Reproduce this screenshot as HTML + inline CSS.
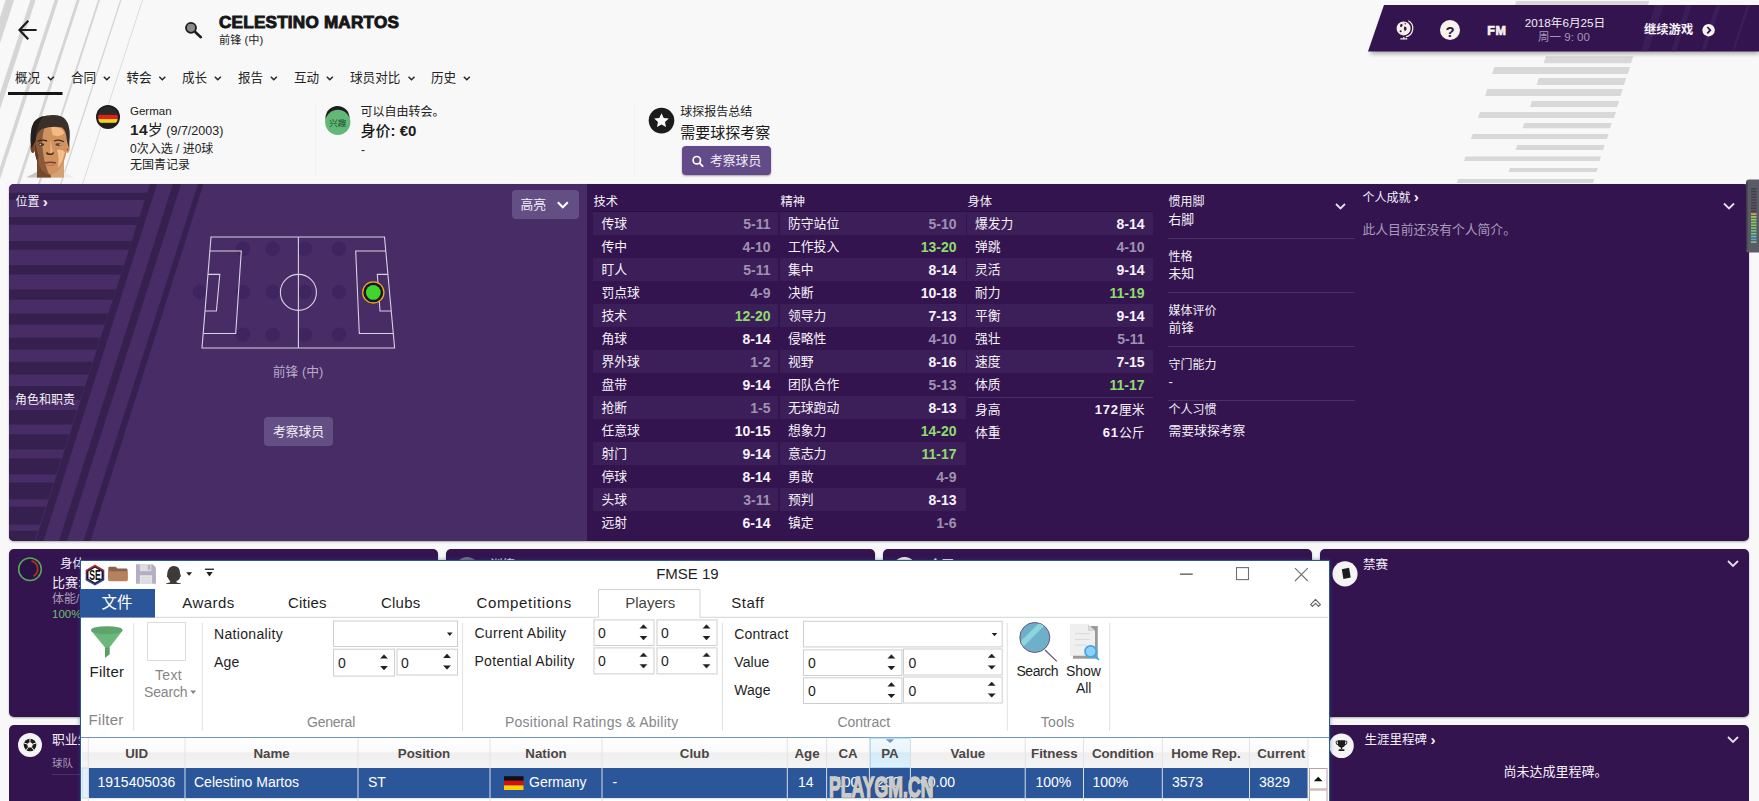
<!DOCTYPE html><html lang="zh"><head><meta charset="utf-8"><title>Celestino Martos</title><style>
html,body{margin:0;padding:0;}
body{width:1759px;height:801px;overflow:hidden;background:#f8f8f8;position:relative;
 font-family:"Liberation Sans","Noto Sans CJK SC",sans-serif;color:#222;}
.a{position:absolute;white-space:nowrap;line-height:1;}
.t{position:absolute;white-space:nowrap;line-height:1;transform:translateY(-50%);}
.tc{position:absolute;white-space:nowrap;line-height:1;transform:translate(-50%,-50%);}
.tr{position:absolute;white-space:nowrap;line-height:1;transform:translate(-100%,-50%);}
svg{position:absolute;left:0;top:0;overflow:visible;}
.w{color:#fff;}
.pn{position:absolute;background:#33144f;border-radius:5px;}
.seg{font-family:"Liberation Sans","Noto Sans CJK SC",sans-serif;}
</style></head><body><svg width="1759" height="801" viewBox="0 0 1759 801"><polygon points="5.6,0 14.1,0 -47.9,190 -56.4,190" fill="#d5d5d5"/><polygon points="30.4,0 35.6,0 -26.3,190 -31.5,190" fill="#d5d5d5"/><polygon points="54.6,0 58.4,0 -3.5,190 -7.3,190" fill="#d5d5d5"/><polygon points="76.7,0 79.7,0 17.8,190 14.8,190" fill="#d5d5d5"/><polygon points="98.0,0 100.0,0 38.1,190 36.0,190" fill="#d5d5d5"/><polygon points="120.1,0 121.5,0 59.6,190 58.2,190" fill="#d5d5d5"/><polygon points="142.1,0 142.9,0 81.0,190 80.2,190" fill="#d5d5d5"/><polygon points="1516.3,1.0 1649.3,1.0 1648.0,5.0 1515.0,5.0" fill="#d8d8d8"/><polygon points="1545.9,56.2 1633.3,56.2 1631.0,63.3 1543.6,63.3" fill="#d8d8d8"/><polygon points="1494.3,67.0 1630.0,67.0 1627.7,74.0 1492.0,74.0" fill="#d8d8d8"/><polygon points="1538.8,78.0 1626.3,78.0 1624.0,85.0 1536.5,85.0" fill="#d8d8d8"/><polygon points="1487.3,89.0 1622.8,89.0 1620.5,96.0 1485.0,96.0" fill="#d8d8d8"/><polygon points="1532.0,101.0 1619.0,101.0 1617.0,107.0 1530.0,107.0" fill="#d8d8d8"/><polygon points="1480.0,112.0 1616.0,112.0 1614.0,118.0 1478.0,118.0" fill="#d8d8d8"/><polygon points="1524.3,123.0 1611.7,123.0 1610.0,128.3 1522.6,128.3" fill="#d8d8d8"/><polygon points="1472.7,134.0 1608.7,134.0 1607.0,139.0 1471.0,139.0" fill="#d8d8d8"/><polygon points="1517.2,145.0 1604.7,145.0 1603.0,150.0 1515.5,150.0" fill="#d8d8d8"/><polygon points="1465.5,156.5 1601.0,156.5 1599.5,161.0 1464.0,161.0" fill="#d8d8d8"/><polygon points="1509.9,168.0 1597.8,168.0 1596.5,172.0 1508.6,172.0" fill="#d8d8d8"/><polygon points="1458.0,179.0 1594.3,179.0 1593.0,183.0 1456.7,183.0" fill="#d8d8d8"/></svg><svg width="1759" height="60" viewBox="0 0 1759 60"><path d="M35.5 30H20M27.5 21.5L19.5 30l8 8.5" fill="none" stroke="#1c1c1c" stroke-width="2.2" stroke-linecap="square"/><circle cx="191" cy="27.8" r="5" fill="#8a8a8a" stroke="#1c1c1c" stroke-width="1.8"/><path d="M195.5 32.2L200.8 37.2" stroke="#1c1c1c" stroke-width="2.6" stroke-linecap="round"/></svg><div class="t" id="nm" style="left:219px;top:21.9px;font-size:16.2px;font-weight:bold;color:#161616;letter-spacing:0.2px;-webkit-text-stroke:0.9px #161616;transform-origin:0 50%;transform:translateY(-50%) scaleX(1.058)">CELESTINO MARTOS</div><div class="t" style="left:219px;top:41px;font-size:11.2px;color:#222">前锋 (中)</div><div class="t" style="left:15px;top:77.8px;font-size:12.6px;color:#222">概况</div><div class="t" style="left:71px;top:77.8px;font-size:12.6px;color:#222">合同</div><div class="t" style="left:126.5px;top:77.8px;font-size:12.6px;color:#222">转会</div><div class="t" style="left:182px;top:77.8px;font-size:12.6px;color:#222">成长</div><div class="t" style="left:238px;top:77.8px;font-size:12.6px;color:#222">报告</div><div class="t" style="left:294px;top:77.8px;font-size:12.6px;color:#222">互动</div><div class="t" style="left:350px;top:77.8px;font-size:12.6px;color:#222">球员对比</div><div class="t" style="left:431px;top:77.8px;font-size:12.6px;color:#222">历史</div><svg width="600" height="100" viewBox="0 0 600 100"><path d="M47.8 76.8l3 3 3-3" fill="none" stroke="#222" stroke-width="1.4"/><path d="M103.8 76.8l3 3 3-3" fill="none" stroke="#222" stroke-width="1.4"/><path d="M159.3 76.8l3 3 3-3" fill="none" stroke="#222" stroke-width="1.4"/><path d="M214.8 76.8l3 3 3-3" fill="none" stroke="#222" stroke-width="1.4"/><path d="M270.8 76.8l3 3 3-3" fill="none" stroke="#222" stroke-width="1.4"/><path d="M326.8 76.8l3 3 3-3" fill="none" stroke="#222" stroke-width="1.4"/><path d="M408.5 76.8l3 3 3-3" fill="none" stroke="#222" stroke-width="1.4"/><path d="M463.8 76.8l3 3 3-3" fill="none" stroke="#222" stroke-width="1.4"/><rect x="8" y="92" width="54.5" height="3" fill="#151515"/></svg><svg width="200" height="200" viewBox="0 0 200 200"><path d="M26 177.6 Q31 175 37.5 171.5 L37.5 177.6 Z" fill="#c2c2c8"/><path d="M62.5 171.5 Q69 174.5 74.5 177.6 L62.5 177.6 Z" fill="#ededee"/><path d="M37 160 L37 177.6 L64 177.6 L64 160 Z" fill="#d3a174"/><path d="M37 160 L37 177.6 L51 177.6 L49 166 Z" fill="#74492c"/><ellipse cx="32.8" cy="147.5" rx="2.3" ry="5.5" fill="#6f4528"/><ellipse cx="67.6" cy="147.5" rx="2.2" ry="5.5" fill="#d89a62"/><circle cx="67.3" cy="149.5" r="1.1" fill="#b5401a"/><path d="M34.3 134 Q34 121 50 121 Q67 121 66.8 134 L66.6 150 Q65.5 162 58.5 170.5 Q50.5 178 43 170.5 Q36 162 34.6 150 Z" fill="#cf9260"/><path d="M34.3 134 Q34 122 47 121.5 Q41 134 42.5 148 Q44 164 49.5 175.5 Q46 174.5 43 170.5 Q36 162 34.6 150 Z" fill="#8a5b38"/><path d="M34.3 136 Q36 148 38.5 156 Q37 162 40 167 Q35.5 160 34.6 150 Z" fill="#5f3c24"/><path d="M51 127 Q62 126 64.5 133 Q60 138 52.5 135 Z" fill="#f3bb82"/><path d="M57 150 Q63 149 64.8 152 Q63 162 58 168 Q59.5 158 57 150 Z" fill="#f3c08a"/><path d="M50.5 140 L53 152 L50 155 Z" fill="#eeb078"/><path d="M31.2 148 Q29.3 130 34 122 Q40 115.2 53 115 Q62 115 65.5 119.5 Q70 125 69.8 136 L69 148 L66.8 141 Q66.5 131 62 127.5 Q52 125.5 42 129 Q36.5 132 35.5 141 Z" fill="#3a302b"/><path d="M31.2 148 Q29.3 130 34 122 Q38 117 44 116 Q36 124 35.5 141 Z" fill="#261e1b"/><path d="M37.5 141.5 Q42 139 47 141" stroke="#3b2718" stroke-width="1.4" fill="none"/><path d="M54 141 Q59 139 64 141.8" stroke="#4a301c" stroke-width="1.3" fill="none"/><ellipse cx="41.3" cy="144.6" rx="3" ry="1.3" fill="#43342b"/><ellipse cx="58.3" cy="144.6" rx="3" ry="1.3" fill="#5a4333"/><circle cx="40.3" cy="144.5" r="0.8" fill="#ddd"/><circle cx="60" cy="144.5" r="0.7" fill="#ddd"/><path d="M46.5 152.5 Q48 155 50 154 Q52.5 155 53.5 152.5" stroke="#4a2d1b" stroke-width="1.5" fill="none"/><path d="M44.8 163 Q50.5 161.5 56 163" stroke="#7e3d2e" stroke-width="1.7" fill="none"/><path d="M46.5 164.8 Q50.5 166 54.5 164.8" stroke="#b86a50" stroke-width="1" fill="none"/></svg><svg width="400" height="200" viewBox="0 0 400 200"><defs><clipPath id="fc"><circle cx="108" cy="117" r="10"/></clipPath></defs><circle cx="108" cy="117" r="12" fill="#1e1e1e"/><g clip-path="url(#fc)"><rect x="96" y="107" width="24" height="7.8" fill="#2a2a2a"/><rect x="96" y="114.8" width="24" height="4.2" fill="#e0211b"/><rect x="96" y="119" width="24" height="3.8" fill="#f7d117"/></g><circle cx="337.5" cy="118" r="12" fill="#1e1e1e"/><circle cx="337.8" cy="122.3" r="12.6" fill="#62b877"/></svg><div class="t" style="left:130px;top:112.3px;font-size:11.5px;color:#222">German</div><div class="t" style="left:130px;top:130px;font-size:12.5px;color:#222"><b style="font-size:15.5px;letter-spacing:0.3px">14</b><span style="font-size:15px">岁</span> (9/7/2003)</div><div class="t" style="left:130px;top:149px;font-size:12px;color:#222">0次入选 / 进0球</div><div class="t" style="left:130px;top:165px;font-size:12px;color:#222">无国青记录</div><div class="tc" style="left:337.8px;top:123px;font-size:8.5px;color:#1f4a2b">兴趣</div><div class="t" style="left:360.5px;top:112px;font-size:12px;color:#222">可以自由转会。</div><div class="t" style="left:360.5px;top:129.5px;font-size:15px;color:#1a1a1a;font-weight:bold"><span style="font-weight:500">身价</span>: €0</div><div class="t" style="left:361px;top:150px;font-size:12px;color:#222">-</div><div class="a" style="left:315px;top:104px;width:1px;height:72px;background:#f1f1f1"></div><div class="a" style="left:634px;top:104px;width:1px;height:72px;background:#f1f1f1"></div><svg width="800" height="200" viewBox="0 0 800 200"><circle cx="661.5" cy="120.6" r="12.8" fill="#1c1c1c"/><path d="M661.5 113.2l2.2 4.7 5.1 0.6-3.8 3.5 1 5.1-4.5-2.5-4.5 2.5 1-5.1-3.8-3.5 5.1-0.6z" fill="#fff"/></svg><div class="t" style="left:680.3px;top:112px;font-size:12px;color:#222">球探报告总结</div><div class="t" style="left:680.3px;top:132.3px;font-size:15px;color:#1a1a1a">需要球探考察</div><div class="a" style="left:682px;top:146px;width:89px;height:28.5px;background:#634b89;border-radius:4px;box-shadow:0 1px 2px rgba(0,0,0,0.35)"></div><svg width="800" height="200" viewBox="0 0 800 200"><circle cx="696.8" cy="160.2" r="3.7" fill="none" stroke="#fff" stroke-width="1.7"/><path d="M699.6 163.2l3 3" stroke="#fff" stroke-width="1.9" stroke-linecap="round"/></svg><div class="t w" style="left:710px;top:160.5px;font-size:12.8px;color:#f3eef8">考察球员</div><svg width="1759" height="70" viewBox="0 0 1759 70"><defs><filter id="bs" x="-5%" y="-20%" width="110%" height="160%"><feGaussianBlur stdDeviation="2"/></filter><clipPath id="bc"><polygon points="1384,5 1759,5 1759,51.5 1368,51.5"/></clipPath></defs><polygon points="1385,9 1759,9 1759,54 1370,54" fill="#000" opacity="0.3" filter="url(#bs)"/><polygon points="1384,5 1759,5 1759,51.5 1368,51.5" fill="#33144f"/><g clip-path="url(#bc)" fill="#432560" opacity="0.55"><polygon points="1655,5 1664,5 1648,51.5 1641,51.5"/><polygon points="1686,5 1692,5 1676,51.5 1671,51.5"/><polygon points="1716,5 1721,5 1705,51.5 1701,51.5"/><polygon points="1747,5 1750,5 1734,51.5 1732,51.5"/></g><g fill="none" stroke="#f4f0e6" stroke-width="1.2"><circle cx="1403.6" cy="28.4" r="6.4" fill="#f4f0e6"/><path d="M1408.3 20.8a8.6 8.6 0 0 1-2.5 16" /><path d="M1403.8 37v1.7M1400.3 38.9h7"/></g><g fill="#33144f"><path d="M1400.3 24.5l1.8-0.8 0.6 1.8-1.4 1.7-1.3-0.8z"/><path d="M1404.3 26.5l1.9 0.5 0.4 2.6-1.7 1.6-1.1-2.3z"/><circle cx="1400.6" cy="31.3" r="1"/><circle cx="1405.2" cy="23.7" r="0.7"/></g><circle cx="1450" cy="30" r="10" fill="#f7f4ec"/><circle cx="1708.6" cy="30.2" r="6.2" fill="#f7f4ec"/><path d="M1707.3 27l3 3.2-3 3.2" fill="none" stroke="#33144f" stroke-width="1.8"/></svg><div class="tc" style="left:1450px;top:30.5px;font-size:15px;font-weight:bold;color:#33144f">?</div><div class="tc" style="left:1496.8px;top:30.6px;font-size:12.5px;font-weight:bold;color:#f7f4ec;-webkit-text-stroke:0.7px #f7f4ec;letter-spacing:0.6px">FM</div><div class="tc" style="left:1565px;top:23.3px;font-size:11.7px;color:#f2eef6">2018年6月25日</div><div class="tc" style="left:1564px;top:38.2px;font-size:11.5px;color:#a596ba">周一 9: 00</div><div class="t" style="left:1644px;top:30.3px;font-size:12.3px;font-weight:bold;color:#f7f4f9">继续游戏</div><div class="a" style="left:9px;top:184px;width:1740px;height:357px;background:#33144f;border-radius:5px;box-shadow:0 1px 2px rgba(0,0,0,0.3)"></div><svg width="1759" height="801" viewBox="0 0 1759 801"><defs><clipPath id="lc"><path d="M14 184H587V541H14a5 5 0 0 1-5-5V189a5 5 0 0 1 5-5z"/></clipPath><clipPath id="hc"><polygon points="9,184 150,184 34.5,541 9,541"/></clipPath></defs><g clip-path="url(#lc)"><rect x="9" y="184" width="578" height="357" fill="#472c66"/><g clip-path="url(#hc)" fill="#35204f"><rect x="9" y="192.8" width="150" height="7.0"/><rect x="9" y="217.0" width="150" height="7.8"/><rect x="9" y="241.1" width="150" height="8.6"/><rect x="9" y="265.2" width="150" height="9.5"/><rect x="9" y="289.4" width="150" height="10.3"/><rect x="9" y="313.6" width="150" height="11.1"/><rect x="9" y="337.7" width="150" height="11.9"/><rect x="9" y="361.9" width="150" height="12.7"/><rect x="9" y="386.0" width="150" height="13.6"/><rect x="9" y="410.1" width="150" height="14.4"/><rect x="9" y="434.3" width="150" height="15.2"/><rect x="9" y="458.4" width="150" height="16.0"/><rect x="9" y="482.6" width="150" height="16.8"/><rect x="9" y="506.8" width="150" height="17.7"/><rect x="9" y="530.9" width="150" height="18.5"/></g><polygon points="150,184 157,184 43.5,541 35.5,541" fill="#35204f"/><polygon points="173,184 181,184 67,541 59,541" fill="#35204f"/><polygon points="198,184 203.4,184 90.5,541 83.5,541" fill="#35204f"/></g><circle cx="243" cy="248.8" r="7.2" fill="#3f2560"/><circle cx="243" cy="292" r="7.2" fill="#3f2560"/><circle cx="243" cy="334.6" r="7.2" fill="#3f2560"/><circle cx="272.6" cy="248.8" r="7.2" fill="#3f2560"/><circle cx="272.6" cy="292" r="7.2" fill="#3f2560"/><circle cx="272.6" cy="334.6" r="7.2" fill="#3f2560"/><circle cx="304.7" cy="248.8" r="7.2" fill="#3f2560"/><circle cx="304.7" cy="292" r="7.2" fill="#3f2560"/><circle cx="304.7" cy="334.6" r="7.2" fill="#3f2560"/><circle cx="339" cy="248.8" r="7.2" fill="#3f2560"/><circle cx="339" cy="292" r="7.2" fill="#3f2560"/><circle cx="339" cy="334.6" r="7.2" fill="#3f2560"/><circle cx="199.8" cy="292" r="7.2" fill="#3f2560"/><g fill="none" stroke="#d9d2e2" stroke-width="1.1"><polygon points="211,237 384.5,237 394.6,348 202,348"/><path d="M298.4 237V348"/><circle cx="298.4" cy="292.4" r="18"/><path d="M209.8 251H241.3L235.7 333.5H203.2"/><path d="M207.9 274.4H219.8L216.4 311H205"/><path d="M385.8 251H355.7L359.3 333.5H393.3"/><path d="M387.9 274.4H377.3L380 311H391.2"/></g><circle cx="373.3" cy="292.4" r="10.6" fill="#1a1424" stroke="#f0a81e" stroke-width="1.3"/><circle cx="373.3" cy="292.4" r="7.4" fill="#3ed62e"/><path d="M1336 204l4.5 4.5 4.5-4.5" fill="none" stroke="#e6e0ee" stroke-width="1.8"/><path d="M1724 203.5l5 5 5-5" fill="none" stroke="#e6e0ee" stroke-width="1.8"/></svg><div class="t" style="left:15.5px;top:202.1px;font-size:12px;color:#f4f0f8">位置 <b style="font-size:15px;line-height:0;position:relative;top:0.5px">›</b></div><div class="t" style="left:15px;top:399.8px;font-size:12px;color:#f4f0f8">角色和职责</div><div class="a" style="left:512px;top:190px;width:67px;height:28.5px;background:#644f84;border-radius:4px"></div><div class="t" style="left:520.5px;top:204.5px;font-size:12.8px;color:#f4f0f8">高亮</div><svg width="700" height="300" viewBox="0 0 700 300"><path d="M557.8 202.3l5 5 5-5" fill="none" stroke="#fff" stroke-width="2"/></svg><div class="tc" style="left:298px;top:371.5px;font-size:12.8px;color:#b7abc6">前锋 (中)</div><div class="a" style="left:264px;top:417px;width:69px;height:29px;background:#644f84;border-radius:4px"></div><div class="tc" style="left:298.5px;top:431.5px;font-size:12.8px;color:#f4f0f8">考察球员</div><div class="t" style="left:593.5px;top:201.5px;font-size:12.3px;color:#f4f0f8">技术</div><div class="a" style="left:593px;top:212.0px;width:185px;height:23.0px;background:#3c1e59"></div><div class="t" style="left:601.5px;top:223.6px;font-size:12.8px;color:#f6f2fa">传球</div><div class="tr" style="left:770.5px;top:223.6px;font-size:14px;font-weight:bold;color:#9f92b1">5-11</div><div class="t" style="left:601.5px;top:246.6px;font-size:12.8px;color:#f6f2fa">传中</div><div class="tr" style="left:770.5px;top:246.6px;font-size:14px;font-weight:bold;color:#9f92b1">4-10</div><div class="a" style="left:593px;top:258.0px;width:185px;height:23.0px;background:#3c1e59"></div><div class="t" style="left:601.5px;top:269.6px;font-size:12.8px;color:#f6f2fa">盯人</div><div class="tr" style="left:770.5px;top:269.6px;font-size:14px;font-weight:bold;color:#9f92b1">5-11</div><div class="t" style="left:601.5px;top:292.6px;font-size:12.8px;color:#f6f2fa">罚点球</div><div class="tr" style="left:770.5px;top:292.6px;font-size:14px;font-weight:bold;color:#9f92b1">4-9</div><div class="a" style="left:593px;top:304.0px;width:185px;height:23.0px;background:#3c1e59"></div><div class="t" style="left:601.5px;top:315.6px;font-size:12.8px;color:#f6f2fa">技术</div><div class="tr" style="left:770.5px;top:315.6px;font-size:14px;font-weight:bold;color:#8fdc6c">12-20</div><div class="t" style="left:601.5px;top:338.6px;font-size:12.8px;color:#f6f2fa">角球</div><div class="tr" style="left:770.5px;top:338.6px;font-size:14px;font-weight:bold;color:#f6f2fa">8-14</div><div class="a" style="left:593px;top:350.0px;width:185px;height:23.0px;background:#3c1e59"></div><div class="t" style="left:601.5px;top:361.6px;font-size:12.8px;color:#f6f2fa">界外球</div><div class="tr" style="left:770.5px;top:361.6px;font-size:14px;font-weight:bold;color:#9f92b1">1-2</div><div class="t" style="left:601.5px;top:384.6px;font-size:12.8px;color:#f6f2fa">盘带</div><div class="tr" style="left:770.5px;top:384.6px;font-size:14px;font-weight:bold;color:#f6f2fa">9-14</div><div class="a" style="left:593px;top:396.0px;width:185px;height:23.0px;background:#3c1e59"></div><div class="t" style="left:601.5px;top:407.6px;font-size:12.8px;color:#f6f2fa">抢断</div><div class="tr" style="left:770.5px;top:407.6px;font-size:14px;font-weight:bold;color:#9f92b1">1-5</div><div class="t" style="left:601.5px;top:430.6px;font-size:12.8px;color:#f6f2fa">任意球</div><div class="tr" style="left:770.5px;top:430.6px;font-size:14px;font-weight:bold;color:#f6f2fa">10-15</div><div class="a" style="left:593px;top:442.0px;width:185px;height:23.0px;background:#3c1e59"></div><div class="t" style="left:601.5px;top:453.6px;font-size:12.8px;color:#f6f2fa">射门</div><div class="tr" style="left:770.5px;top:453.6px;font-size:14px;font-weight:bold;color:#f6f2fa">9-14</div><div class="t" style="left:601.5px;top:476.6px;font-size:12.8px;color:#f6f2fa">停球</div><div class="tr" style="left:770.5px;top:476.6px;font-size:14px;font-weight:bold;color:#f6f2fa">8-14</div><div class="a" style="left:593px;top:488.0px;width:185px;height:23.0px;background:#3c1e59"></div><div class="t" style="left:601.5px;top:499.6px;font-size:12.8px;color:#f6f2fa">头球</div><div class="tr" style="left:770.5px;top:499.6px;font-size:14px;font-weight:bold;color:#9f92b1">3-11</div><div class="t" style="left:601.5px;top:522.6px;font-size:12.8px;color:#f6f2fa">远射</div><div class="tr" style="left:770.5px;top:522.6px;font-size:14px;font-weight:bold;color:#f6f2fa">6-14</div><div class="a" style="left:593px;top:211px;width:185px;height:1px;background:#2a0f43"></div><div class="t" style="left:780.5px;top:201.5px;font-size:12.3px;color:#f4f0f8">精神</div><div class="a" style="left:780px;top:212.0px;width:185.5px;height:23.0px;background:#3c1e59"></div><div class="t" style="left:788px;top:223.6px;font-size:12.8px;color:#f6f2fa">防守站位</div><div class="tr" style="left:956.5px;top:223.6px;font-size:14px;font-weight:bold;color:#9f92b1">5-10</div><div class="t" style="left:788px;top:246.6px;font-size:12.8px;color:#f6f2fa">工作投入</div><div class="tr" style="left:956.5px;top:246.6px;font-size:14px;font-weight:bold;color:#8fdc6c">13-20</div><div class="a" style="left:780px;top:258.0px;width:185.5px;height:23.0px;background:#3c1e59"></div><div class="t" style="left:788px;top:269.6px;font-size:12.8px;color:#f6f2fa">集中</div><div class="tr" style="left:956.5px;top:269.6px;font-size:14px;font-weight:bold;color:#f6f2fa">8-14</div><div class="t" style="left:788px;top:292.6px;font-size:12.8px;color:#f6f2fa">决断</div><div class="tr" style="left:956.5px;top:292.6px;font-size:14px;font-weight:bold;color:#f6f2fa">10-18</div><div class="a" style="left:780px;top:304.0px;width:185.5px;height:23.0px;background:#3c1e59"></div><div class="t" style="left:788px;top:315.6px;font-size:12.8px;color:#f6f2fa">领导力</div><div class="tr" style="left:956.5px;top:315.6px;font-size:14px;font-weight:bold;color:#f6f2fa">7-13</div><div class="t" style="left:788px;top:338.6px;font-size:12.8px;color:#f6f2fa">侵略性</div><div class="tr" style="left:956.5px;top:338.6px;font-size:14px;font-weight:bold;color:#9f92b1">4-10</div><div class="a" style="left:780px;top:350.0px;width:185.5px;height:23.0px;background:#3c1e59"></div><div class="t" style="left:788px;top:361.6px;font-size:12.8px;color:#f6f2fa">视野</div><div class="tr" style="left:956.5px;top:361.6px;font-size:14px;font-weight:bold;color:#f6f2fa">8-16</div><div class="t" style="left:788px;top:384.6px;font-size:12.8px;color:#f6f2fa">团队合作</div><div class="tr" style="left:956.5px;top:384.6px;font-size:14px;font-weight:bold;color:#9f92b1">5-13</div><div class="a" style="left:780px;top:396.0px;width:185.5px;height:23.0px;background:#3c1e59"></div><div class="t" style="left:788px;top:407.6px;font-size:12.8px;color:#f6f2fa">无球跑动</div><div class="tr" style="left:956.5px;top:407.6px;font-size:14px;font-weight:bold;color:#f6f2fa">8-13</div><div class="t" style="left:788px;top:430.6px;font-size:12.8px;color:#f6f2fa">想象力</div><div class="tr" style="left:956.5px;top:430.6px;font-size:14px;font-weight:bold;color:#8fdc6c">14-20</div><div class="a" style="left:780px;top:442.0px;width:185.5px;height:23.0px;background:#3c1e59"></div><div class="t" style="left:788px;top:453.6px;font-size:12.8px;color:#f6f2fa">意志力</div><div class="tr" style="left:956.5px;top:453.6px;font-size:14px;font-weight:bold;color:#8fdc6c">11-17</div><div class="t" style="left:788px;top:476.6px;font-size:12.8px;color:#f6f2fa">勇敢</div><div class="tr" style="left:956.5px;top:476.6px;font-size:14px;font-weight:bold;color:#9f92b1">4-9</div><div class="a" style="left:780px;top:488.0px;width:185.5px;height:23.0px;background:#3c1e59"></div><div class="t" style="left:788px;top:499.6px;font-size:12.8px;color:#f6f2fa">预判</div><div class="tr" style="left:956.5px;top:499.6px;font-size:14px;font-weight:bold;color:#f6f2fa">8-13</div><div class="t" style="left:788px;top:522.6px;font-size:12.8px;color:#f6f2fa">镇定</div><div class="tr" style="left:956.5px;top:522.6px;font-size:14px;font-weight:bold;color:#9f92b1">1-6</div><div class="a" style="left:780px;top:211px;width:185.5px;height:1px;background:#2a0f43"></div><div class="t" style="left:967.5px;top:201.5px;font-size:12.3px;color:#f4f0f8">身体</div><div class="a" style="left:967px;top:212.0px;width:185.5px;height:23.0px;background:#3c1e59"></div><div class="t" style="left:975px;top:223.6px;font-size:12.8px;color:#f6f2fa">爆发力</div><div class="tr" style="left:1144.5px;top:223.6px;font-size:14px;font-weight:bold;color:#f6f2fa">8-14</div><div class="t" style="left:975px;top:246.6px;font-size:12.8px;color:#f6f2fa">弹跳</div><div class="tr" style="left:1144.5px;top:246.6px;font-size:14px;font-weight:bold;color:#9f92b1">4-10</div><div class="a" style="left:967px;top:258.0px;width:185.5px;height:23.0px;background:#3c1e59"></div><div class="t" style="left:975px;top:269.6px;font-size:12.8px;color:#f6f2fa">灵活</div><div class="tr" style="left:1144.5px;top:269.6px;font-size:14px;font-weight:bold;color:#f6f2fa">9-14</div><div class="t" style="left:975px;top:292.6px;font-size:12.8px;color:#f6f2fa">耐力</div><div class="tr" style="left:1144.5px;top:292.6px;font-size:14px;font-weight:bold;color:#8fdc6c">11-19</div><div class="a" style="left:967px;top:304.0px;width:185.5px;height:23.0px;background:#3c1e59"></div><div class="t" style="left:975px;top:315.6px;font-size:12.8px;color:#f6f2fa">平衡</div><div class="tr" style="left:1144.5px;top:315.6px;font-size:14px;font-weight:bold;color:#f6f2fa">9-14</div><div class="t" style="left:975px;top:338.6px;font-size:12.8px;color:#f6f2fa">强壮</div><div class="tr" style="left:1144.5px;top:338.6px;font-size:14px;font-weight:bold;color:#9f92b1">5-11</div><div class="a" style="left:967px;top:350.0px;width:185.5px;height:23.0px;background:#3c1e59"></div><div class="t" style="left:975px;top:361.6px;font-size:12.8px;color:#f6f2fa">速度</div><div class="tr" style="left:1144.5px;top:361.6px;font-size:14px;font-weight:bold;color:#f6f2fa">7-15</div><div class="t" style="left:975px;top:384.6px;font-size:12.8px;color:#f6f2fa">体质</div><div class="tr" style="left:1144.5px;top:384.6px;font-size:14px;font-weight:bold;color:#8fdc6c">11-17</div><div class="a" style="left:967px;top:211px;width:185.5px;height:1px;background:#2a0f43"></div><div class="a" style="left:967px;top:396.5px;width:185.5px;height:1px;background:#4a2e66"></div><div class="t" style="left:975px;top:410px;font-size:12.8px;color:#f6f2fa">身高</div><div class="tr" style="left:1144.5px;top:410px;font-size:12.8px;color:#f6f2fa"><b style="font-size:13px;letter-spacing:0.8px">172</b>厘米</div><div class="t" style="left:975px;top:433px;font-size:12.8px;color:#f6f2fa">体重</div><div class="tr" style="left:1144.5px;top:433px;font-size:12.8px;color:#f6f2fa"><b style="font-size:13px;letter-spacing:0.8px">61</b>公斤</div><div class="t" style="left:1168.5px;top:202.0px;font-size:12px;color:#f4f0f8">惯用脚</div><div class="t" style="left:1168.5px;top:220px;font-size:12.8px;color:#f4f0f8">右脚</div><div class="t" style="left:1168.5px;top:256.6px;font-size:12px;color:#f4f0f8">性格</div><div class="t" style="left:1168.5px;top:274px;font-size:12.8px;color:#f4f0f8">未知</div><div class="t" style="left:1168.5px;top:310.5px;font-size:12px;color:#f4f0f8">媒体评价</div><div class="t" style="left:1168.5px;top:328.3px;font-size:12.8px;color:#f4f0f8">前锋</div><div class="t" style="left:1168.5px;top:364.5px;font-size:12px;color:#f4f0f8">守门能力</div><div class="t" style="left:1168.5px;top:382.2px;font-size:12.8px;color:#f4f0f8">-</div><div class="t" style="left:1168.5px;top:410.3px;font-size:12px;color:#f4f0f8">个人习惯</div><div class="t" style="left:1168.5px;top:431px;font-size:12.8px;color:#f4f0f8">需要球探考察</div><div class="a" style="left:1168px;top:237.5px;width:187px;height:1px;background:#4b3068"></div><div class="a" style="left:1168px;top:291.7px;width:187px;height:1px;background:#4b3068"></div><div class="a" style="left:1168px;top:345.7px;width:187px;height:1px;background:#4b3068"></div><div class="a" style="left:1168px;top:399.5px;width:187px;height:1px;background:#4b3068"></div><div class="t" style="left:1362.4px;top:197.5px;font-size:12px;color:#f4f0f8">个人成就 <b style="font-size:15px;line-height:0;position:relative;top:0.5px">›</b></div><div class="t" style="left:1362.4px;top:229.5px;font-size:12.8px;color:#a99cbc">此人目前还没有个人简介。</div><svg width="1759" height="300" viewBox="0 0 1759 300"><rect x="1746" y="179.4" width="16" height="73" rx="3" fill="#5b5b66"/><rect x="1746" y="182" width="1.5" height="68" fill="#3c3c44"/><rect x="1751" y="188.0" width="5.5" height="1.5" fill="#3f3f46"/><rect x="1751" y="190.8" width="5.5" height="1.5" fill="#3f3f46"/><rect x="1751" y="193.6" width="5.5" height="1.5" fill="#3f3f46"/><rect x="1751" y="196.4" width="5.5" height="1.5" fill="#3f3f46"/><rect x="1751" y="199.2" width="5.5" height="1.5" fill="#3f3f46"/><rect x="1751" y="202.0" width="5.5" height="1.5" fill="#3f3f46"/><rect x="1751" y="204.8" width="5.5" height="1.5" fill="#3f3f46"/><rect x="1751" y="207.6" width="5.5" height="1.5" fill="#3f3f46"/><rect x="1751" y="210.4" width="5.5" height="1.5" fill="#3f3f46"/><rect x="1751" y="213.3" width="5.5" height="1.6" fill="#f0a050"/><rect x="1751" y="216.1" width="5.5" height="1.6" fill="#9bd46a"/><rect x="1751" y="218.9" width="5.5" height="1.6" fill="#8fd460"/><rect x="1751" y="221.7" width="5.5" height="1.6" fill="#86d060"/><rect x="1751" y="224.5" width="5.5" height="1.6" fill="#80cc62"/><rect x="1751" y="227.3" width="5.5" height="1.6" fill="#7ccc66"/><rect x="1751" y="230.1" width="5.5" height="1.6" fill="#70c880"/><rect x="1751" y="232.9" width="5.5" height="1.6" fill="#68c8a0"/><rect x="1751" y="235.7" width="5.5" height="1.6" fill="#60c0b0"/><rect x="1751" y="238.5" width="5.5" height="1.6" fill="#5aa0e0"/><rect x="1751" y="241.3" width="5.5" height="1.6" fill="#70c890"/></svg><div class="pn" style="left:9px;top:549px;width:429px;height:167.6px;box-shadow:0 1px 2px rgba(0,0,0,0.3)"></div><div class="pn" style="left:9px;top:724.5px;width:429px;height:90px"></div><div class="pn" style="left:446px;top:549px;width:429px;height:167.6px;box-shadow:0 1px 2px rgba(0,0,0,0.3)"></div><div class="pn" style="left:446px;top:724.5px;width:429px;height:90px"></div><div class="pn" style="left:883px;top:549px;width:429px;height:167.6px;box-shadow:0 1px 2px rgba(0,0,0,0.3)"></div><div class="pn" style="left:883px;top:724.5px;width:429px;height:90px"></div><div class="pn" style="left:1320px;top:549px;width:429px;height:167.6px;box-shadow:0 1px 2px rgba(0,0,0,0.3)"></div><div class="pn" style="left:1320px;top:724.5px;width:429px;height:90px"></div><svg width="1759" height="801" viewBox="0 0 1759 801"><circle cx="30" cy="569.3" r="11.3" fill="#2b1245" stroke="#58a85e" stroke-width="1.5"/><path d="M31.5 560.8a8.5 8.5 0 0 1 2 15.5" fill="none" stroke="#a8321c" stroke-width="1.8"/><circle cx="467" cy="569" r="12" fill="#74707f"/><circle cx="904.5" cy="569" r="12" fill="#f4f1ea"/><circle cx="30" cy="745" r="12" fill="#f4f4f4"/><circle cx="30" cy="745" r="6.3" fill="#1c1c1c"/><path d="M30 741.8l3 2.2-1.1 3.5h-3.8l-1.1-3.5z" fill="#f7f4ec"/><path d="M30 738.7v3.1M36 743l-3 1M33.7 750l-1.8-2.5M26.3 750l1.8-2.5M24 743l3 1" stroke="#f7f4ec" stroke-width="1"/><circle cx="1345" cy="573.8" r="12.6" fill="#f4f4f4"/><path d="M1341.8 569.3l7.3-1.6 1.6 9.8-7.3 1.6z" fill="#1c1c1c"/><circle cx="1341.5" cy="745.8" r="12.3" fill="#f4f4f4"/><path d="M1337.8 740.3h7.4v3.5a3.7 3.7 0 0 1-7.4 0z" fill="#1c1c1c"/><path d="M1337.8 741.3h-1.6v1.5a2 2 0 0 0 2 2M1345.2 741.3h1.6v1.5a2 2 0 0 1-2 2" fill="none" stroke="#1c1c1c" stroke-width="0.9"/><rect x="1340.8" y="747" width="1.4" height="2.3" fill="#1c1c1c"/><rect x="1338.6" y="749.3" width="5.8" height="1.7" fill="#1c1c1c"/><path d="M1728 561l5 5 5-5" fill="none" stroke="#e6e0ee" stroke-width="1.8"/><path d="M1728 737l5 5 5-5" fill="none" stroke="#e6e0ee" stroke-width="1.8"/></svg><div class="t" style="left:60px;top:563.5px;font-size:12.5px;color:#f4f0f8">身体</div><div class="t" style="left:52px;top:581.7px;font-size:13px;color:#f4f0f8">比赛: 出色</div><div class="t" style="left:52px;top:599px;font-size:12px;color:#a99cbc">体能/比赛状态</div><div class="t" style="left:52px;top:615px;font-size:11.5px;color:#6cc070">100% / 100%</div><div class="t" style="left:490px;top:565px;font-size:12.5px;color:#f4f0f8">训练</div><div class="t" style="left:929px;top:565px;font-size:12.5px;color:#f4f0f8">合同</div><div class="t" style="left:52px;top:740px;font-size:12.8px;color:#f4f0f8">职业生涯数据 <b style="font-size:15px;line-height:0;position:relative;top:0.5px">›</b></div><div class="t" style="left:52px;top:763px;font-size:10.5px;color:#a99cbc">球队</div><div class="a" style="left:52px;top:773.5px;width:380px;height:1px;background:#4b3068"></div><div class="t" style="left:1363px;top:565px;font-size:12.5px;color:#f4f0f8">禁赛</div><div class="t" style="left:1364.5px;top:740.3px;font-size:12.5px;color:#f4f0f8">生涯里程碑 <b style="font-size:15px;line-height:0;position:relative;top:0.5px">›</b></div><div class="tc" style="left:1555.5px;top:771px;font-size:13px;color:#f4f0f8">尚未达成里程碑。</div><div class="a" id="win" style="left:80px;top:560px;width:1249.5px;height:260px;background:#fff;border:1px solid #2b579a;box-sizing:border-box;box-shadow:0 0 4px rgba(43,70,140,0.55)"></div><svg width="1759" height="801" viewBox="0 0 1759 801"><defs><linearGradient id="hx" x1="0" y1="0" x2="0" y2="1"><stop offset="0" stop-color="#e02010"/><stop offset="0.5" stop-color="#4a3070"/><stop offset="1" stop-color="#1848c0"/></linearGradient><linearGradient id="hd" x1="0" y1="0" x2="0" y2="1"><stop offset="0" stop-color="#ffffff"/><stop offset="0.45" stop-color="#fafafa"/><stop offset="0.5" stop-color="#efefef"/><stop offset="1" stop-color="#f4f4f4"/></linearGradient><linearGradient id="pa" x1="0" y1="0" x2="0" y2="1"><stop offset="0" stop-color="#f2f9fd"/><stop offset="0.45" stop-color="#e8f4fb"/><stop offset="0.5" stop-color="#d4ebf7"/><stop offset="1" stop-color="#e0f1fa"/></linearGradient></defs><polygon points="95,565.4 103.6,570.3 103.6,579.9 95,584.8 86.4,579.9 86.4,570.3" fill="#fff" stroke="url(#hx)" stroke-width="1.4"/><polygon points="95,566.9 102.3,571.1 102.3,579.1 95,583.3 87.7,579.1 87.7,571.1" fill="#fff" stroke="#1b1830" stroke-width="1.5"/><path d="M108.3 568a1.2 1.2 0 0 1 1.2-1.2h6.2l1.8 1.8h8.8a1.2 1.2 0 0 1 1.2 1.2v9.8h-19.2z" fill="#8b5f4b"/><rect x="108.2" y="571.3" width="19.5" height="9.9" rx="1.3" fill="#b6825e"/><path d="M136 564.2h16.7l3.2 3.2v16.4h-19.9z" fill="#b5adc4"/><rect x="139.8" y="564.2" width="11.5" height="7" fill="#dddde0"/><rect x="147.8" y="565" width="2.4" height="4.8" fill="#b5adc4"/><rect x="139.8" y="575.2" width="12.3" height="8.6" fill="#e4e4e6"/><path d="M141.5 577.5h9M141.5 580h9M141.5 582.3h9" stroke="#d0d0d4" stroke-width="0.8"/><path d="M173.8 566c3.8 0 6.2 2.8 6.2 6.6 0 1.6 0.9 2.6 0.9 3.4 0 0.7-0.8 0.7-0.9 1.3-0.3 2.5-1.9 3.3-3.4 3.5v1.8l4.3 0.9v0.4h-14.8v-0.4l4.2-1.2c0-1.5-1.9-2.7-2.5-4.8-0.9-0.4-1.2-1.7-0.6-2.5 0.1-5 2.2-9 6.6-9z" fill="#3e3a38"/><path d="M186.2 572.3h5.9l-2.95 3.4z" fill="#1e1e1e"/><rect x="204.9" y="568.6" width="9.1" height="1.3" fill="#1e1e1e"/><path d="M206.4 572.1h6.2l-3.1 4.4z" fill="#1e1e1e"/><path d="M1180 574.2h12.7" stroke="#757575" stroke-width="1.6"/><rect x="1236.5" y="567.6" width="12" height="12" fill="none" stroke="#707070" stroke-width="1.1"/><path d="M1295 568.2l12.8 12.8M1307.8 568.2l-12.8 12.8" stroke="#707070" stroke-width="1.1"/><path d="M1310.6 604.6L1315.5 599.4L1320.4 604.6L1318.5 606.4L1315.5 603.3L1312.5 606.4Z" fill="#fff" stroke="#666" stroke-width="1.2" stroke-linejoin="round"/><rect x="81" y="589" width="74" height="28.6" fill="#2b579a"/><path d="M155 617.3H598.5V589.5H700V617.3H1328" fill="none" stroke="#d4d4d4" stroke-width="1"/><rect x="133.2" y="623" width="1" height="108" fill="#e2e2e2"/><rect x="201.8" y="623" width="1" height="108" fill="#e2e2e2"/><rect x="462.1" y="623" width="1" height="108" fill="#e2e2e2"/><rect x="722.0" y="623" width="1" height="108" fill="#e2e2e2"/><rect x="1006.8" y="623" width="1" height="108" fill="#e2e2e2"/><rect x="1109.1" y="623" width="1" height="108" fill="#e2e2e2"/><path d="M91 630.5l14 17v10.3l4.5-3.6v-6.7l13.2-17z" fill="#6bb87c"/><ellipse cx="106.8" cy="630.2" rx="15.8" ry="4" fill="#5ea46c"/><path d="M105 647.5h4.5v6.7l-4.5 3.6z" fill="#56a066"/><rect x="147.5" y="622.5" width="38" height="38" fill="#fff" stroke="#dcdcdc" stroke-width="1"/><path d="M190.2 690.5h6l-3 3.4z" fill="#868686"/><rect x="333.5" y="621.0" width="124.0" height="25.5" fill="#fff" stroke="#cecece" stroke-width="1"/><path d="M447.0 632.5h5.6l-2.8 3.4z" fill="#1e1e1e"/><rect x="333.5" y="649.2" width="61.0" height="26.9" fill="#fff" stroke="#cecece" stroke-width="1"/><path d="M380.5 658.5l3.5-3.8 3.5 3.8" fill="#1e1e1e" stroke="#1e1e1e" stroke-width="0.6" stroke-linejoin="round"/><path d="M380.5 666.1l3.5 3.8 3.5-3.8" fill="#1e1e1e" stroke="#1e1e1e" stroke-width="0.6" stroke-linejoin="round"/><rect x="397.0" y="649.2" width="60.5" height="25.8" fill="#fff" stroke="#cecece" stroke-width="1"/><path d="M443.5 657.9l3.5-3.8 3.5 3.8" fill="#1e1e1e" stroke="#1e1e1e" stroke-width="0.6" stroke-linejoin="round"/><path d="M443.5 665.5l3.5 3.8 3.5-3.8" fill="#1e1e1e" stroke="#1e1e1e" stroke-width="0.6" stroke-linejoin="round"/><rect x="594.0" y="619.9" width="60.0" height="25.6" fill="#fff" stroke="#cecece" stroke-width="1"/><path d="M640.0 628.5l3.5-3.8 3.5 3.8" fill="#1e1e1e" stroke="#1e1e1e" stroke-width="0.6" stroke-linejoin="round"/><path d="M640.0 636.1l3.5 3.8 3.5-3.8" fill="#1e1e1e" stroke="#1e1e1e" stroke-width="0.6" stroke-linejoin="round"/><rect x="657.0" y="619.9" width="60.0" height="25.6" fill="#fff" stroke="#cecece" stroke-width="1"/><path d="M703.0 628.5l3.5-3.8 3.5 3.8" fill="#1e1e1e" stroke="#1e1e1e" stroke-width="0.6" stroke-linejoin="round"/><path d="M703.0 636.1l3.5 3.8 3.5-3.8" fill="#1e1e1e" stroke="#1e1e1e" stroke-width="0.6" stroke-linejoin="round"/><rect x="594.0" y="647.9" width="60.0" height="26.0" fill="#fff" stroke="#cecece" stroke-width="1"/><path d="M640.0 656.7l3.5-3.8 3.5 3.8" fill="#1e1e1e" stroke="#1e1e1e" stroke-width="0.6" stroke-linejoin="round"/><path d="M640.0 664.3l3.5 3.8 3.5-3.8" fill="#1e1e1e" stroke="#1e1e1e" stroke-width="0.6" stroke-linejoin="round"/><rect x="657.0" y="647.9" width="60.0" height="26.0" fill="#fff" stroke="#cecece" stroke-width="1"/><path d="M703.0 656.7l3.5-3.8 3.5 3.8" fill="#1e1e1e" stroke="#1e1e1e" stroke-width="0.6" stroke-linejoin="round"/><path d="M703.0 664.3l3.5 3.8 3.5-3.8" fill="#1e1e1e" stroke="#1e1e1e" stroke-width="0.6" stroke-linejoin="round"/><rect x="803.5" y="621.3" width="198.7" height="25.6" fill="#fff" stroke="#cecece" stroke-width="1"/><path d="M991.7 632.9h5.6l-2.8 3.4z" fill="#1e1e1e"/><rect x="803.5" y="649.9" width="98.4" height="25.6" fill="#fff" stroke="#cecece" stroke-width="1"/><path d="M887.9 658.5l3.5-3.8 3.5 3.8" fill="#1e1e1e" stroke="#1e1e1e" stroke-width="0.6" stroke-linejoin="round"/><path d="M887.9 666.1l3.5 3.8 3.5-3.8" fill="#1e1e1e" stroke="#1e1e1e" stroke-width="0.6" stroke-linejoin="round"/><rect x="903.5" y="649.0" width="98.7" height="26.0" fill="#fff" stroke="#cecece" stroke-width="1"/><path d="M988.2 657.8l3.5-3.8 3.5 3.8" fill="#1e1e1e" stroke="#1e1e1e" stroke-width="0.6" stroke-linejoin="round"/><path d="M988.2 665.4l3.5 3.8 3.5-3.8" fill="#1e1e1e" stroke="#1e1e1e" stroke-width="0.6" stroke-linejoin="round"/><rect x="803.5" y="677.8" width="98.4" height="25.7" fill="#fff" stroke="#cecece" stroke-width="1"/><path d="M887.9 686.4l3.5-3.8 3.5 3.8" fill="#1e1e1e" stroke="#1e1e1e" stroke-width="0.6" stroke-linejoin="round"/><path d="M887.9 694.0l3.5 3.8 3.5-3.8" fill="#1e1e1e" stroke="#1e1e1e" stroke-width="0.6" stroke-linejoin="round"/><rect x="903.5" y="677.0" width="98.7" height="26.0" fill="#fff" stroke="#cecece" stroke-width="1"/><path d="M988.2 685.8l3.5-3.8 3.5 3.8" fill="#1e1e1e" stroke="#1e1e1e" stroke-width="0.6" stroke-linejoin="round"/><path d="M988.2 693.4l3.5 3.8 3.5-3.8" fill="#1e1e1e" stroke="#1e1e1e" stroke-width="0.6" stroke-linejoin="round"/><path d="M1045 650l11.8 11.4" stroke="#6a5080" stroke-width="1.3"/><circle cx="1034.8" cy="637.5" r="15" fill="#6db0c8" stroke="#6a5080" stroke-width="1"/><clipPath id="mg"><circle cx="1034.8" cy="637.5" r="14.4"/></clipPath><path d="M1020 642l22-22 5 3-25 25z" fill="#8ed4dc" clip-path="url(#mg)"/><rect x="1073" y="626" width="24.8" height="32.7" fill="#9a9a9a"/><path d="M1070 624h18l7 7v24.7h-25z" fill="#efefef"/><path d="M1088 624l7 7h-7z" fill="#d8d8d8"/><path d="M1075 633.7h15M1075 639.4h15M1075 645h12" stroke="#d8d8d8" stroke-width="1"/><path d="M1094.5 655.5l4.3 4.3" stroke="#38a8f0" stroke-width="1.8"/><circle cx="1090.6" cy="651.4" r="5.6" fill="#90d0f8" stroke="#38a8f0" stroke-width="1.7"/><rect x="81" y="737" width="1248" height="1" fill="#7795c4"/><rect x="82" y="738" width="1226" height="30" fill="url(#hd)"/><rect x="870" y="738" width="40.5" height="30" fill="url(#pa)" stroke="#86c6ee" stroke-width="1"/><path d="M885.8 739.3h8.4l-4.2 3.6z" fill="#6a96cf"/><rect x="88.5" y="768" width="1219.5" height="30.2" fill="#2b579a"/><rect x="82" y="768" width="6.5" height="30.2" fill="#e4effa" stroke="#b9d3ef" stroke-width="0.8"/><rect x="87.8" y="738" width="1" height="30" fill="#e3e3e3"/><rect x="87.8" y="768" width="1" height="34" fill="#d9dde6"/><rect x="184.5" y="738" width="1" height="30" fill="#e3e3e3"/><rect x="184.5" y="768" width="1" height="34" fill="#d9dde6"/><rect x="357.5" y="738" width="1" height="30" fill="#e3e3e3"/><rect x="357.5" y="768" width="1" height="34" fill="#d9dde6"/><rect x="489.5" y="738" width="1" height="30" fill="#e3e3e3"/><rect x="489.5" y="768" width="1" height="34" fill="#d9dde6"/><rect x="601.5" y="738" width="1" height="30" fill="#e3e3e3"/><rect x="601.5" y="768" width="1" height="34" fill="#d9dde6"/><rect x="786.8" y="738" width="1" height="30" fill="#e3e3e3"/><rect x="786.8" y="768" width="1" height="34" fill="#d9dde6"/><rect x="826.1" y="738" width="1" height="30" fill="#e3e3e3"/><rect x="826.1" y="768" width="1" height="34" fill="#d9dde6"/><rect x="868.9" y="738" width="1" height="30" fill="#e3e3e3"/><rect x="868.9" y="768" width="1" height="34" fill="#d9dde6"/><rect x="909.9" y="738" width="1" height="30" fill="#e3e3e3"/><rect x="909.9" y="768" width="1" height="34" fill="#d9dde6"/><rect x="1024.7" y="738" width="1" height="30" fill="#e3e3e3"/><rect x="1024.7" y="768" width="1" height="34" fill="#d9dde6"/><rect x="1083.0" y="738" width="1" height="30" fill="#e3e3e3"/><rect x="1083.0" y="768" width="1" height="34" fill="#d9dde6"/><rect x="1161.8" y="738" width="1" height="30" fill="#e3e3e3"/><rect x="1161.8" y="768" width="1" height="34" fill="#d9dde6"/><rect x="1249.0" y="738" width="1" height="30" fill="#e3e3e3"/><rect x="1249.0" y="768" width="1" height="34" fill="#d9dde6"/><rect x="1307.5" y="738" width="1" height="30" fill="#e3e3e3"/><rect x="1307.5" y="768" width="1" height="34" fill="#d9dde6"/><rect x="82" y="798.2" width="1246" height="1" fill="#e6e6e6"/><rect x="504" y="776.2" width="19.5" height="4.6" fill="#111"/><rect x="504" y="780.8" width="19.5" height="4.6" fill="#dd0c0c"/><rect x="504" y="785.4" width="19.5" height="4.6" fill="#ffce00"/><rect x="1309" y="768" width="18.5" height="34" fill="#fff"/><rect x="1309.5" y="768.5" width="17.5" height="20.5" fill="#fff" stroke="#b9a3a0" stroke-width="1"/><path d="M1313.8 781.3l4.4-4.6 4.4 4.6z" fill="#111"/><rect x="1309.5" y="790" width="17.5" height="14" fill="#fff" stroke="#b9a3a0" stroke-width="1"/></svg><div class="tc" style="left:95px;top:575.2px;font-size:15.5px;font-weight:bold;color:#111;transform:translate(-50%,-50%) scaleX(0.56)">SE</div><div class="tc" id="ttl" style="left:687.4px;top:573.3px;font-size:15px;color:#1e1e1e">FMSE 19</div><div class="tc" style="left:117px;top:603.4px;font-size:15.5px;color:#fff">文件</div><div class="t" style="left:182.3px;top:601.5px;font-size:15px;color:#1e1e1e;letter-spacing:0.42px;">Awards</div><div class="t" style="left:288.0px;top:601.5px;font-size:15px;color:#1e1e1e;letter-spacing:0.2px;">Cities</div><div class="t" style="left:381.0px;top:601.5px;font-size:15px;color:#1e1e1e;letter-spacing:0.21px;">Clubs</div><div class="t" style="left:476.4px;top:601.5px;font-size:15px;color:#1e1e1e;letter-spacing:0.67px;">Competitions</div><div class="t" style="left:625.2px;top:601.5px;font-size:15px;color:#444;letter-spacing:0.02px;">Players</div><div class="t" style="left:731.2px;top:601.5px;font-size:15px;color:#1e1e1e;letter-spacing:0.52px;">Staff</div><div class="t" style="left:89.5px;top:670.8px;font-size:15px;color:#1e1e1e;letter-spacing:0.24px;">Filter</div><div class="t" style="left:88.6px;top:719.3px;font-size:15px;color:#868686;letter-spacing:0.28px;">Filter</div><div class="t" style="left:214.0px;top:633.7px;font-size:14px;color:#1e1e1e;letter-spacing:0.33px;">Nationality</div><div class="t" style="left:214.0px;top:662.0px;font-size:14px;color:#1e1e1e;letter-spacing:0.19px;">Age</div><div class="t" style="left:474.4px;top:632.7px;font-size:14px;color:#1e1e1e;letter-spacing:0.32px;">Current Ability</div><div class="t" style="left:474.4px;top:661.3px;font-size:14px;color:#1e1e1e;letter-spacing:0.33px;">Potential Ability</div><div class="t" style="left:734.3px;top:634.0px;font-size:14px;color:#1e1e1e;letter-spacing:0.16px;">Contract</div><div class="t" style="left:734.3px;top:662.4px;font-size:14px;color:#1e1e1e;letter-spacing:0.08px;">Value</div><div class="t" style="left:734.3px;top:690.4px;font-size:14px;color:#1e1e1e;letter-spacing:0.03px;">Wage</div><div class="t" style="left:1016.5px;top:671.2px;font-size:14px;color:#1e1e1e;letter-spacing:-0.48px;">Search</div><div class="t" style="left:1066.0px;top:671.2px;font-size:14px;color:#1e1e1e;letter-spacing:-0.08px;">Show</div><div class="t" style="left:1076.0px;top:688.3px;font-size:14px;color:#1e1e1e;letter-spacing:-0.05px;">All</div><div class="t" style="left:155.0px;top:675.0px;font-size:14px;color:#868686;letter-spacing:0.33px;">Text</div><div class="t" style="left:144.0px;top:692.0px;font-size:14px;color:#868686;letter-spacing:-0.14px;">Search</div><div class="t" style="left:307.0px;top:722.0px;font-size:14px;color:#868686;letter-spacing:-0.26px;">General</div><div class="t" style="left:504.9px;top:722.1px;font-size:14px;color:#868686;letter-spacing:0.28px;">Positional Ratings &amp; Ability</div><div class="t" style="left:837.5px;top:722.3px;font-size:14px;color:#868686;letter-spacing:-0.05px;">Contract</div><div class="t" style="left:1040.7px;top:722.0px;font-size:14px;color:#868686;letter-spacing:0.22px;">Tools</div><div class="t" style="left:338px;top:663.3px;font-size:14px;color:#1e1e1e">0</div><div class="t" style="left:401px;top:662.5px;font-size:14px;color:#1e1e1e">0</div><div class="t" style="left:598px;top:633.3px;font-size:14px;color:#1e1e1e">0</div><div class="t" style="left:661px;top:633.3px;font-size:14px;color:#1e1e1e">0</div><div class="t" style="left:598px;top:661.3px;font-size:14px;color:#1e1e1e">0</div><div class="t" style="left:661px;top:661.3px;font-size:14px;color:#1e1e1e">0</div><div class="t" style="left:808px;top:663.3px;font-size:14px;color:#1e1e1e">0</div><div class="t" style="left:908.5px;top:662.5px;font-size:14px;color:#1e1e1e">0</div><div class="t" style="left:808px;top:691.3px;font-size:14px;color:#1e1e1e">0</div><div class="t" style="left:908.5px;top:690.5px;font-size:14px;color:#1e1e1e">0</div><div class="tc" style="left:136.7px;top:754.4px;font-size:13.3px;font-weight:bold;color:#4a4644">UID</div><div class="tc" style="left:271.5px;top:754.4px;font-size:13.3px;font-weight:bold;color:#4a4644">Name</div><div class="tc" style="left:424.0px;top:754.4px;font-size:13.3px;font-weight:bold;color:#4a4644">Position</div><div class="tc" style="left:546.0px;top:754.4px;font-size:13.3px;font-weight:bold;color:#4a4644">Nation</div><div class="tc" style="left:694.6px;top:754.4px;font-size:13.3px;font-weight:bold;color:#4a4644">Club</div><div class="tc" style="left:807.0px;top:754.4px;font-size:13.3px;font-weight:bold;color:#4a4644">Age</div><div class="tc" style="left:848.0px;top:754.4px;font-size:13.3px;font-weight:bold;color:#4a4644">CA</div><div class="tc" style="left:889.9px;top:754.4px;font-size:13.3px;font-weight:bold;color:#4a4644">PA</div><div class="tc" style="left:967.8px;top:754.4px;font-size:13.3px;font-weight:bold;color:#4a4644">Value</div><div class="tc" style="left:1054.3px;top:754.4px;font-size:13.3px;font-weight:bold;color:#4a4644">Fitness</div><div class="tc" style="left:1122.9px;top:754.4px;font-size:13.3px;font-weight:bold;color:#4a4644">Condition</div><div class="tc" style="left:1205.9px;top:754.4px;font-size:13.3px;font-weight:bold;color:#4a4644">Home Rep.</div><div class="tc" style="left:1281.2px;top:754.4px;font-size:13.3px;font-weight:bold;color:#4a4644">Current</div><div class="t" style="left:97.5px;top:782.1px;font-size:14px;color:#fff">1915405036</div><div class="t" style="left:194px;top:782.1px;font-size:14px;color:#fff">Celestino Martos</div><div class="t" style="left:368px;top:782.1px;font-size:14px;color:#fff">ST</div><div class="t" style="left:529px;top:782.1px;font-size:14px;color:#fff">Germany</div><div class="t" style="left:612.5px;top:782.1px;font-size:14px;color:#fff">-</div><div class="t" style="left:798px;top:782.1px;font-size:14px;color:#fff">14</div><div class="t" style="left:835px;top:782.1px;font-size:14px;color:#fff">100</div><div class="t" style="left:877px;top:782.1px;font-size:14px;color:#fff">200</div><div class="t" style="left:920px;top:782.1px;font-size:14px;color:#fff">€0.00</div><div class="t" style="left:1035.5px;top:782.1px;font-size:14px;color:#fff">100%</div><div class="t" style="left:1092.5px;top:782.1px;font-size:14px;color:#fff">100%</div><div class="t" style="left:1172px;top:782.1px;font-size:14px;color:#fff">3573</div><div class="t" style="left:1259px;top:782.1px;font-size:14px;color:#fff">3829</div><div class="t" style="left:828.6px;top:787.2px;font-size:29.5px;font-weight:bold;color:#cbcbcb;-webkit-text-stroke:1.6px #cbcbcb;transform-origin:0 50%;transform:translateY(-50%) scaleX(0.6);text-shadow:1px 1px 1px rgba(0,0,0,0.5)" id="wm">PLAYGM.CN</div></body></html>
